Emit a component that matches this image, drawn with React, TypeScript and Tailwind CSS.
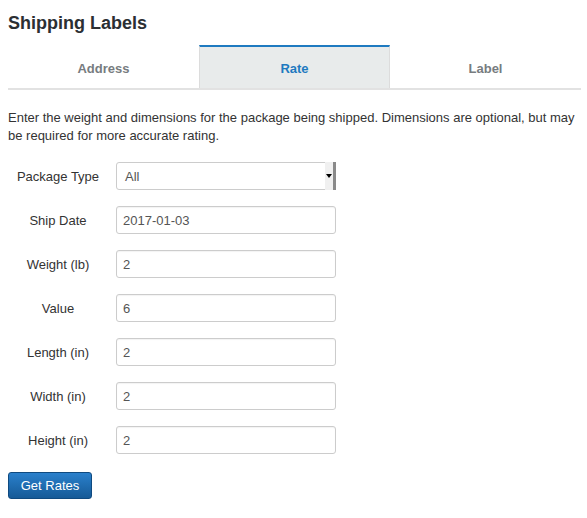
import React from "react";

const rows: { label: string; value: string }[] = [
  { label: "Ship Date", value: "2017-01-03" },
  { label: "Weight (lb)", value: "2" },
  { label: "Value", value: "6" },
  { label: "Length (in)", value: "2" },
  { label: "Width (in)", value: "2" },
  { label: "Height (in)", value: "2" },
];

export default function App() {
  return (
    <div
      className="w-[587px] min-h-[518px] bg-white px-2 pt-[11px] text-[#333]"
      style={{ fontFamily: '"Liberation Sans", Arial, sans-serif' }}
    >
      <h1 className="text-[18px] leading-[24px] font-bold text-[#2b2f33]">Shipping Labels</h1>

      <div className="mt-[10px] grid w-[573px] grid-cols-3 border-b-2 border-[#e2e2e2] text-[13px] font-bold">
        <div className="flex h-[43px] items-center justify-center text-[#777c80] pt-[4px]">Address</div>
        <div className="flex h-[43px] items-center justify-center border-x border-t-2 border-x-[#dcdcdc] border-t-[#1e7ac0] bg-[#e8ebeb] pt-[2px] text-[#1e7ac0]">
          Rate
        </div>
        <div className="flex h-[43px] items-center justify-center text-[#777c80] pt-[4px]">Label</div>
      </div>

      <p className="mt-[19px] text-[13px] leading-[18px] text-[#333]">
        Enter the weight and dimensions for the package being shipped. Dimensions are optional, but may be required for more accurate rating.
      </p>

      <div className="mt-[17px] flex flex-col gap-4">
        <div className="flex items-center gap-2">
          <div className="w-[100px] pt-[2px] text-center text-[13px]">Package Type</div>
          <div className="relative flex h-[28px] w-[220px] items-center rounded-l-[3px] border border-[#ccc] bg-white pl-[8px] pt-[1px] text-[13px] text-[#555]">
            All
            <div className="absolute right-[-1px] top-[-1px] flex h-[28px] w-[11px] items-center justify-start border-r-[3px] border-[#8a8a8a] bg-[#f0f0f0]">
              <div className="ml-[1px] h-0 w-0 border-x-[3px] border-t-[4px] border-x-transparent border-t-black" />
            </div>
          </div>
        </div>
        {rows.map((r) => (
          <div key={r.label} className="flex items-center gap-2">
            <div className="w-[100px] pt-[2px] text-center text-[13px]">{r.label}</div>
            <input
              readOnly
              value={r.value}
              className="h-[28px] w-[220px] rounded-[3px] border border-[#ccc] bg-white px-[6px] pt-[1px] text-[13px] text-[#555] shadow-[inset_0_1px_1px_rgba(0,0,0,0.05)] outline-none"
              style={{ fontFamily: '"Liberation Sans", Arial, sans-serif' }}
            />
          </div>
        ))}
      </div>

      <button
        className="mt-[18px] h-[27px] w-[84px] rounded-[3px] border border-[#0f4a80] bg-gradient-to-b from-[#2a80cc] to-[#165a97] pt-[1px] text-[13px] text-white"
        style={{ fontFamily: '"Liberation Sans", Arial, sans-serif' }}
      >
        Get Rates
      </button>
    </div>
  );
}
